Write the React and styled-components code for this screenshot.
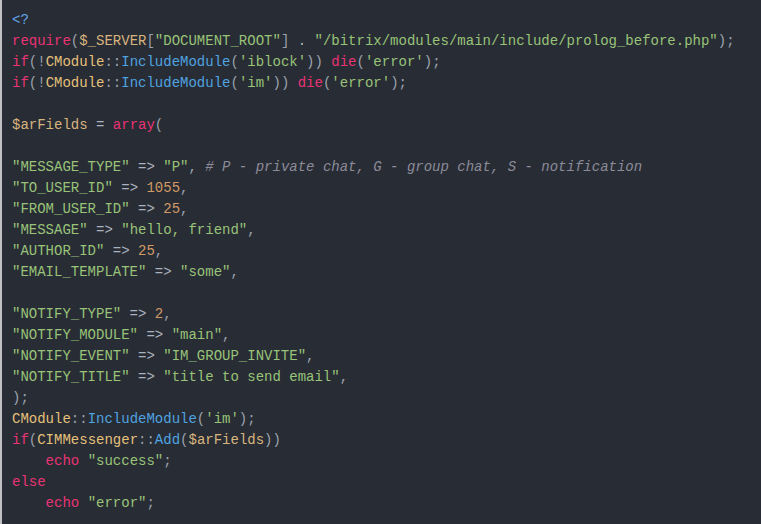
import React from "react";
import styled, { createGlobalStyle } from "styled-components";

const Global = createGlobalStyle`
  html, body { margin: 0; padding: 0; background: #282c34; }
  body { overflow: hidden; }
`;

const CodeBlock = styled.pre`
  margin: 0;
  width: 761px;
  height: 524px;
  box-sizing: border-box;
  padding: 10px 12px 0 10px;
  background: #282c34;
  border-left: 2px solid #bfc1c4;
  font-family: "Liberation Mono", "DejaVu Sans Mono", monospace;
  font-size: 14px;
  line-height: 21px;
  color: #abb2bf;
  overflow: hidden;
`;

const Line = styled.div`
  height: 21px;
  white-space: pre;
`;

const colors = {
  kw: "#e83374",
  str: "#98c379",
  num: "#d19a66",
  cls: "#e5c07b",
  fn: "#4fa3e0",
  var: "#d8b47f",
  punc: "#9aa1ad",
  op: "#abb2bf",
  tag: "#61a6e8",
  com: "#8c8b9a",
};

const Tok = styled.span`
  color: ${(p) => colors[p.$k] || "#abb2bf"};
  font-style: ${(p) => (p.$k === "com" ? "italic" : "normal")};
`;

const L = (...t) => t;
const k = (s) => ["kw", s];
const s = (s) => ["str", s];
const n = (s) => ["num", s];
const c = (s) => ["cls", s];
const f = (s) => ["fn", s];
const v = (s) => ["var", s];
const p = (s) => ["punc", s];
const o = (s) => ["op", s];

const lines = [
  L(["tag", "<?"]),
  L(k("require"), p("("), v("$_SERVER"), p("["), s('"DOCUMENT_ROOT"'), p("]"), o(" . "), s('"/bitrix/modules/main/include/prolog_before.php"'), p(");")),
  L(k("if"), p("(!"), c("CModule"), p("::"), f("IncludeModule"), p("("), s("'iblock'"), p("))"), o(" "), k("die"), p("("), s("'error'"), p(");")),
  L(k("if"), p("(!"), c("CModule"), p("::"), f("IncludeModule"), p("("), s("'im'"), p("))"), o(" "), k("die"), p("("), s("'error'"), p(");")),
  L(),
  L(v("$arFields"), o(" = "), k("array"), p("(")),
  L(),
  L(s('"MESSAGE_TYPE"'), o(" => "), s('"P"'), p(", "), ["com", "# P - private chat, G - group chat, S - notification"]),
  L(s('"TO_USER_ID"'), o(" => "), n("1055"), p(",")),
  L(s('"FROM_USER_ID"'), o(" => "), n("25"), p(",")),
  L(s('"MESSAGE"'), o(" => "), s('"hello, friend"'), p(",")),
  L(s('"AUTHOR_ID"'), o(" => "), n("25"), p(",")),
  L(s('"EMAIL_TEMPLATE"'), o(" => "), s('"some"'), p(",")),
  L(),
  L(s('"NOTIFY_TYPE"'), o(" => "), n("2"), p(",")),
  L(s('"NOTIFY_MODULE"'), o(" => "), s('"main"'), p(",")),
  L(s('"NOTIFY_EVENT"'), o(" => "), s('"IM_GROUP_INVITE"'), p(",")),
  L(s('"NOTIFY_TITLE"'), o(" => "), s('"title to send email"'), p(",")),
  L(p(");")),
  L(c("CModule"), p("::"), f("IncludeModule"), p("("), s("'im'"), p(");")),
  L(k("if"), p("("), c("CIMMessenger"), p("::"), f("Add"), p("("), v("$arFields"), p("))")),
  L(o("    "), k("echo"), o(" "), s('"success"'), p(";")),
  L(k("else")),
  L(o("    "), k("echo"), o(" "), s('"error"'), p(";")),
];

export default function App() {
  return (
    <>
      <Global />
      <CodeBlock>
        {lines.map((toks, i) => (
          <Line key={i}>
            {toks.length === 0
              ? " "
              : toks.map(([kind, text], j) => (
                  <Tok key={j} $k={kind}>
                    {text}
                  </Tok>
                ))}
          </Line>
        ))}
      </CodeBlock>
    </>
  );
}
